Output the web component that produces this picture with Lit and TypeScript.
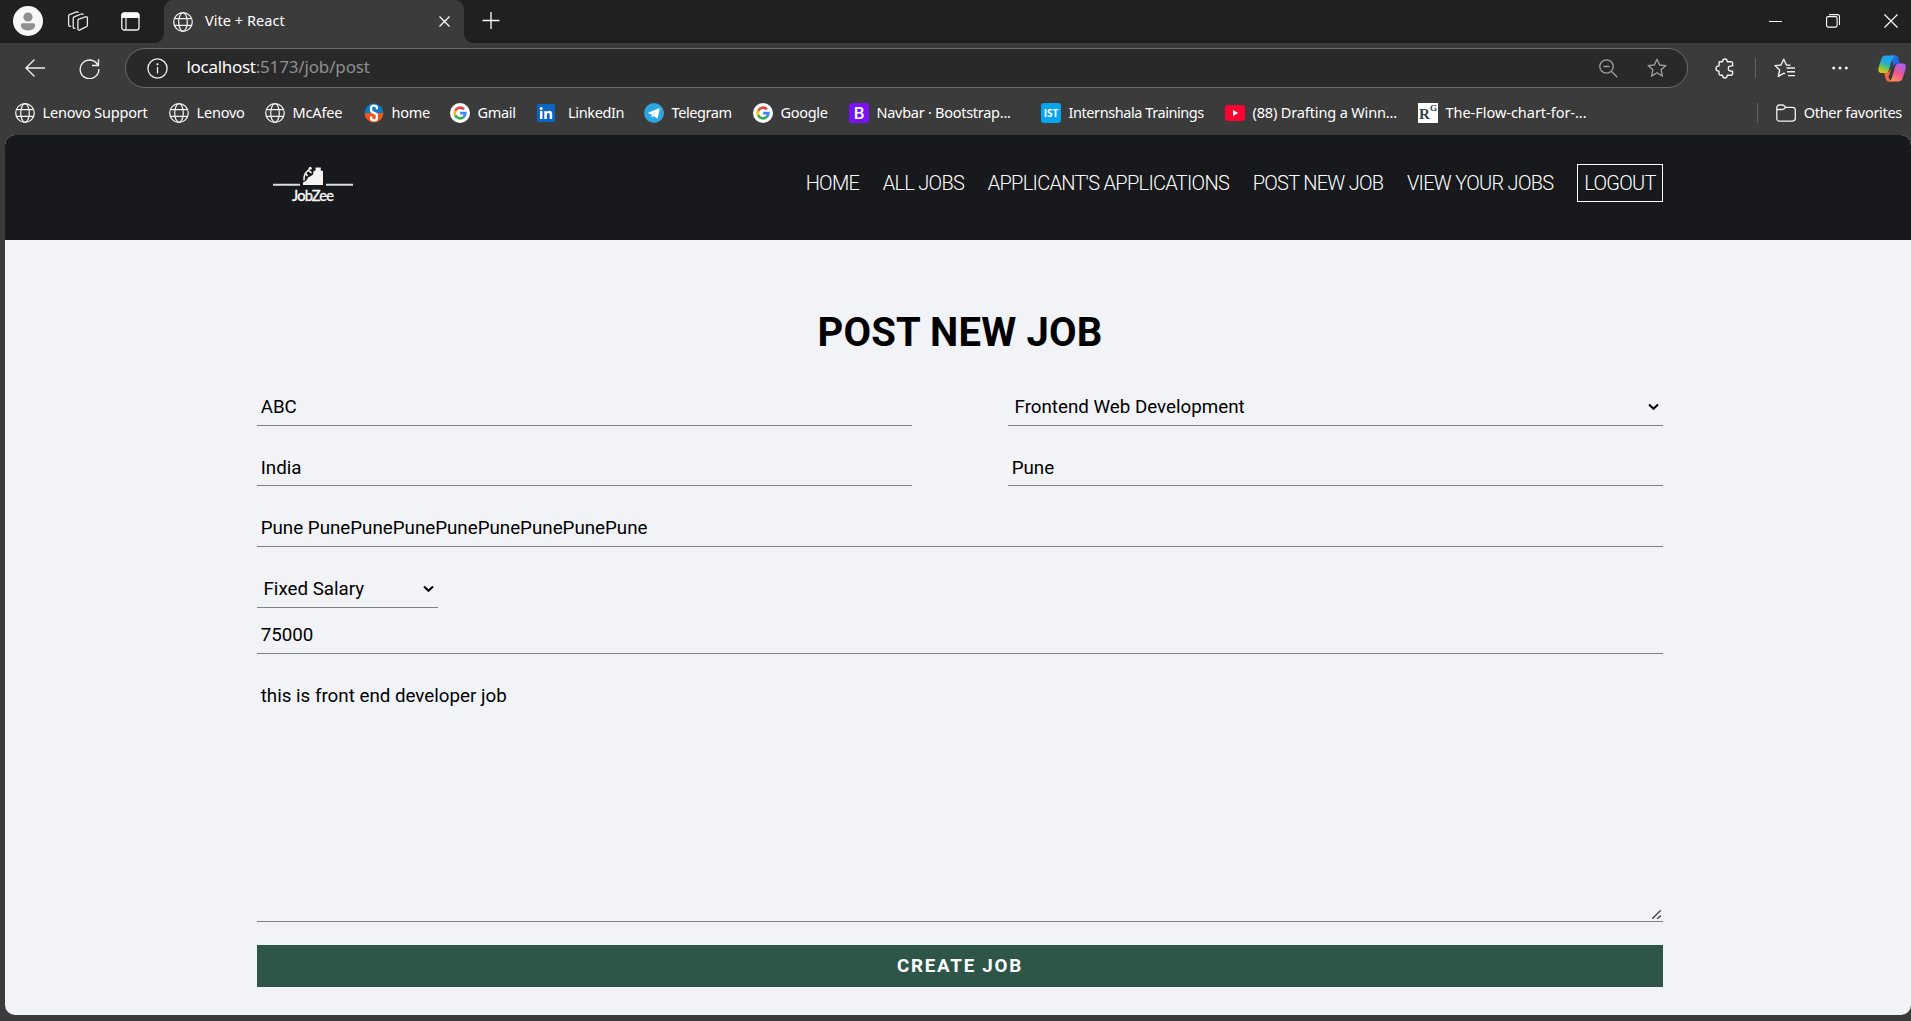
import { LitElement, html, css, svg } from "lit";
import { customElement } from "lit/decorators.js";

const globe = (size = 20) => html`<svg width=${size} height=${size} viewBox="0 0 20 20" fill="none" stroke="#f2f2f2" stroke-width="1.25">
  <circle cx="10" cy="10" r="9.3" />
  <ellipse cx="10" cy="10" rx="4.3" ry="9.3" />
  <path d="M1.6 6.6h16.8M1.6 13.4h16.8" />
</svg>`;

const google = html`<svg width="20" height="20" viewBox="0 0 20 20">
  <circle cx="10" cy="10" r="10" fill="#fff" />
  <g fill="none" stroke-width="2.6">
    <path d="M5.2 7.7A5.4 5.4 0 0 1 13.9 6.3" stroke="#ea4335" />
    <path d="M5.3 12.5A5.4 5.4 0 0 1 5.2 7.6" stroke="#fbbc05" />
    <path d="M13.7 14A5.4 5.4 0 0 1 5.2 12.4" stroke="#34a853" />
    <path d="M10.1 10.1h5.3A5.4 5.4 0 0 1 13.6 14" stroke="#4285f4" />
  </g>
</svg>`;

const shala = html`<svg width="20" height="20" viewBox="0 0 20 20">
  <path d="M.6 10a9.4 9.4 0 0 1 18.8 0z" fill="#0a7bc4" />
  <path d="M.6 10a9.4 9.4 0 0 0 18.8 0z" fill="#f0561f" />
  <path d="M12.9 6.2V4.6Q12.9 2.6 10 2.6T7.1 4.8V7.2Q7.1 8.9 10 9.9T12.9 12.6V15Q12.9 17.4 10 17.4T7.1 15V13.6" fill="none" stroke="#fff" stroke-width="2.3" />
</svg>`;

const linkedin = html`<svg width="20" height="20" viewBox="0 0 20 20">
  <rect x="0" y="1" width="18" height="18" rx="1.5" fill="#0a66c2" />
  <path d="M3 8h2.5v8H3zM7.3 8h2.4v1.2Q10.4 7.8 12.3 7.8 15.2 7.8 15.2 11.2V16h-2.5v-4.3Q12.7 9.9 11.3 9.9 9.8 9.9 9.8 11.8V16H7.3z" fill="#fff" />
  <circle cx="4.2" cy="5.4" r="1.5" fill="#fff" />
</svg>`;

const telegram = html`<svg width="20" height="20" viewBox="0 0 20 20">
  <circle cx="10" cy="10" r="10" fill="#2ca5e0" />
  <path d="M3.6 9.9 15 5.3q.9-.2.7.8l-1.9 8.7q-.3.9-1.1.4l-2.9-2.1-1.5 1.4q-.4.2-.5-.3l-.4-2.9-2.9-.8q-.7-.2 0-.6z" fill="#fff" />
  <path d="m7.6 11.500 5.700-4-4.400 4.600-.4 2.200" fill="#bfe0f2" />
</svg>`;

const bootstrap = html`<span class="tile boot">B</span>`;
const ist = html`<span class="tile ist">IST</span>`;
const youtube = html`<svg width="20" height="20" viewBox="0 0 20 20">
  <rect y="2" width="20" height="16" rx="3" fill="#ff0033" /><path d="m8 7 5.200 3L8 13z" fill="#fff" />
</svg>`;
const rgate = html`<span class="tile rg">R<sup>G</sup></span>`;

interface Bookmark { icon: unknown; label: string; width: number; track: number; cls?: string }

const bookmarks: Bookmark[] = [
  { icon: globe(), label: "Lenovo Support", width: 154, track: -0.2 },
  { icon: globe(), label: "Lenovo", width: 96, track: -0.2 },
  { icon: globe(), label: "McAfee", width: 99, track: -0.15 },
  { icon: shala, label: "home", width: 86, track: -0.3 },
  { icon: google, label: "Gmail", width: 87, track: -0.3 },
  { icon: linkedin, label: "LinkedIn", width: 107, track: -0.35, cls: "wide" },
  { icon: telegram, label: "Telegram", width: 109, track: -0.42 },
  { icon: google, label: "Google", width: 96, track: -0.3 },
  { icon: bootstrap, label: "Navbar · Bootstrap...", width: 192, track: -0.27 },
  { icon: ist, label: "Internshala Trainings", width: 184, track: -0.43 },
  { icon: youtube, label: "(88) Drafting a Winn...", width: 193, track: -0.14 },
  { icon: rgate, label: "The-Flow-chart-for-...", width: 200, track: -0.03 },
];

const star = svg`<path d="M10 1.2l2.6 5.8 6.3.6-4.8 4.2 1.4 6.3L10 14.8l-5.5 3.3 1.4-6.3L1.1 7.6 7.4 7z" />`;

@customElement("browser-tabs")
class BrowserTabs extends LitElement {
  static styles = css`
    :host { display: flex; height: 43px; background: #202020; color: #fff; font: 14.5px "Noto Sans", "Open Sans", sans-serif; }
    svg { display: block; flex: none; }
    .lead { display: flex; align-items: center; width: 164px; padding: 0 0 1px 13px; box-sizing: border-box; flex: none; }
    .stack { margin-left: 24px; }
    .panel { margin-left: 32px; }
    .tab { position: relative; width: 300px; box-sizing: border-box; background: #3b3b3b; border-radius: 9px 9px 0 0; display: flex; align-items: center; padding: 0 14px 0 9px; }
    .tab::before, .tab::after { content: ""; position: absolute; bottom: 0; width: 9px; height: 9px; }
    .tab::before { left: -9px; background: radial-gradient(circle at 0 0, #202020 8.5px, #3b3b3b 9px); }
    .tab::after { right: -9px; background: radial-gradient(circle at 100% 0, #202020 8.5px, #3b3b3b 9px); }
    .title { margin-left: 12px; flex: 1; letter-spacing: 0.05px; line-height: 20px; padding-bottom: 3px; }
    .plus { margin: 12px 0 0 18px; }
    .win { margin-left: auto; display: flex; align-items: center; gap: 44px; padding: 0 13px 1px 0; }
  `;
  render() {
    return html`
      <div class="lead">
        <svg width="30" height="30" viewBox="0 0 30 30"><circle cx="15" cy="15" r="15" fill="#f7f7f7" /><circle cx="15" cy="11" r="4.6" fill="#919191" /><path d="M9.6 17.2h10.8q1.8 0 1.8 1.8 0 5.4-7.2 5.4T7.8 19q0-1.8 1.8-1.8z" fill="#919191" /></svg>
        <svg class="stack" width="22" height="21" viewBox="0 0 22 21" fill="none" stroke="#e8e8e8" stroke-width="1.3" stroke-linejoin="round"><path d="M11.2 8.3 18.4 5.8q2-.5 2 1.2v7.2q0 1-.9 1.4l-6.6 3.3q-2 .8-2-1.2V9.6q0-.9.9-1.3z" /><path d="M8.4 17.2Q6.2 18 6.2 15.9V7.3q0-1 .9-1.4l7.2-2.9q1.5-.5 1.8.8M4.2 15Q1.6 16 1.6 13.5V5.1q0-1 .9-1.4L9.6.9q1.300-.4 1.800.8" /></svg>
        <svg class="panel" width="19" height="19" viewBox="0 0 19 19"><rect x=".8" y=".8" width="17.2" height="17.2" rx="2.6" fill="none" stroke="#f4f4f4" stroke-width="1.3" /><path d="M.5 6V3Q.5.5 3 .5h13Q18.4.5 18.4 3v3z" fill="#f8f8f8" /><path d="M5 6v12" stroke="#f4f4f4" stroke-width="1.2" /></svg>
      </div>
      <div class="tab">
        ${globe()}
        <span class="title">Vite + React</span>
        <svg width="11" height="11" viewBox="0 0 11 11" stroke="#fff" stroke-width="1.3"><path d="m.5.5 10 10M10.5.5l-10 10" /></svg>
      </div>
      <svg class="plus" width="18" height="18" viewBox="0 0 18 18" stroke="#fff" stroke-width="1.3"><path d="M9 0v17M.5 8.5h17" /></svg>
      <div class="win">
        <svg width="13" height="13" viewBox="0 0 13 13" stroke="#fff"><path d="M0 6.5h13" /></svg>
        <svg width="14" height="14" viewBox="0 0 14 14" fill="none" stroke="#fff" stroke-width="1.1"><rect x=".6" y="2.6" width="10.5" height="10.5" rx="1.5" /><path d="M3 .6h8.500q2 0 2 2v8.500" /></svg>
        <svg width="14" height="14" viewBox="0 0 14 14" stroke="#fff" stroke-width="1.2"><path d="m.5.5 13 13m0-13-13 13" /></svg>
      </div>`;
  }
}

@customElement("browser-toolbar")
class BrowserToolbar extends LitElement {
  static styles = css`
    :host { display: flex; align-items: center; height: 49px; background: #3b3b3b; font: 17px "Noto Sans", "Open Sans", sans-serif; box-sizing: border-box; padding-top: 1px; }
    svg { display: block; flex: none; }
    .back { margin-left: 25px; }
    .reload { margin-left: 34px; }
    .pill { margin-left: 25px; width: 1563px; height: 40px; box-sizing: border-box; border: 1px solid #6b6b6b; border-radius: 20px; background: #292929; display: flex; align-items: center; padding: 0 20px 0 21px; flex: none; }
    .url { flex: 1; margin-left: 18.5px; color: #8f8f8f; letter-spacing: -0.15px; padding-bottom: 3px; }
    .host { color: #fff; letter-spacing: -0.3px; }
    .mag { margin-right: 29px; }
    .puzzle { margin-left: 27px; }
    .sep { width: 1px; height: 20px; background: #636363; margin: 0 18px 0 20px; }
    .dots { margin: 0 30px 0 37px; }
  `;
  render() {
    return html`
      <svg class="back" width="20" height="18" viewBox="0 0 20 18" fill="none" stroke="#f0f0f0" stroke-width="1.4"><path d="M20 9H1M9.5.6 1 9l8.5 8.4" /></svg>
      <svg class="reload" width="21" height="21" viewBox="0 0 21 21" fill="none" stroke="#f0f0f0" stroke-width="1.4"><path d="M19.3 8.3A9.3 9.3 0 1 0 19.8 11M19.5 1.200v6.300H13" /></svg>
      <div class="pill">
        <svg width="21" height="21" viewBox="0 0 21 21" fill="none" stroke="#f0f0f0" stroke-width="1.3"><circle cx="10.5" cy="10.5" r="9.6" /><path d="M10.5 9v6.5" /><circle cx="10.5" cy="6.3" r=".5" fill="#f0f0f0" /></svg>
        <span class="url"><span class="host">localhost</span>:5173/job/post</span>
        <svg class="mag" width="19" height="19" viewBox="0 0 19 19" fill="none" stroke="#a0a0a0" stroke-width="1.3"><circle cx="7.5" cy="7.5" r="6.7" /><path d="m12.3 12.3 6 6M4.5 7.500h6" /></svg>
        <svg width="20" height="20" viewBox="0 0 20 20" fill="none" stroke="#a0a0a0" stroke-width="1.3" stroke-linejoin="round">${star}</svg>
      </div>
      <svg class="puzzle" width="20" height="21" viewBox="0 0 20 21" fill="none" stroke="#f0f0f0" stroke-width="1.4" stroke-linejoin="round"><path d="M4.200 3.800h3.300Q7.600 1 9.900 1t2.400 2.800h3.900q1.400 0 1.400 1.400v2.700Q13.300 7.500 13.300 10.500t4.300 2.600v2.700q0 1.400-1.400 1.400h-3.900Q12.200 20 9.900 20t-2.400-2.800H5.400Q4 17.200 4 15.800v-2.700Q1 13 1 10.500T4 7.900z" /></svg>
      <span class="sep"></span>
      <svg width="21" height="20" viewBox="0 0 21 20" fill="none" stroke="#f0f0f0" stroke-width="1.4" stroke-linejoin="round"><path d="M9.900 15.200 4.300 18.500l1.400-6.500L1 7.600 7 7l2.700-5.800L12.400 7l4 .3M12.500 10h8.500M13 13.800h8M14 17.600h7M9.900 15.200l1.200.5" /></svg>
      <svg class="dots" width="16" height="4" viewBox="0 0 16 4" fill="#f4f4f4"><circle cx="1.7" cy="2" r="1.5" /><circle cx="8" cy="2" r="1.5" /><circle cx="14.3" cy="2" r="1.5" /></svg>
      <svg width="28" height="27" viewBox="0 0 28 27">
        <defs>
          <linearGradient id="cool" x1=".6" y1="0" x2=".2" y2="1"><stop offset="0" stop-color="#20a4f0" /><stop offset=".4" stop-color="#21a9d8" /><stop offset=".68" stop-color="#6bc25b" /><stop offset="1" stop-color="#f5c400" /></linearGradient>
          <linearGradient id="warm" x1=".7" y1="0" x2=".2" y2="1"><stop offset="0" stop-color="#b060f0" /><stop offset=".5" stop-color="#ee5697" /><stop offset="1" stop-color="#ff9655" /></linearGradient>
          <linearGradient id="deep" x1="0" y1="0" x2="1" y2="1"><stop offset="0" stop-color="#1c8fe8" /><stop offset="1" stop-color="#2146d2" /></linearGradient>
        </defs>
        <path d="M13 .5h4.500q2 0 2.800 2.300L21.800 9h-3.300q-2.200 0-3 2.500z" fill="url(#deep)" />
        <path d="M6 17h4.500l2.500-3-2.500 8q1 3.500 3 4.500h-3q-2 0-2.800-2.500z" fill="#f4653c" />
        <path d="M7.500.5h9.500q-2 .5-2.900 3.500L10.700 15.500Q9.800 18 7.500 18H3.500Q-.8 18 .6 12.500L3.300 4Q4.400.5 7.500.5z" fill="url(#cool)" />
        <path d="M20.500 26.500H11q2-.5 2.900-3.500L17.300 11.500Q18.200 8.500 20.500 8.500h4q4.300 0 2.900 6L24.700 23q-1.100 3.500-4.200 3.500z" fill="url(#warm)" />
      </svg>`;
  }
}

@customElement("bookmark-bar")
class BookmarkBar extends LitElement {
  static styles = css`
    :host { display: flex; align-items: center; height: 43px; background: #3b3b3b; padding: 0 9px 1px 15px; box-sizing: border-box; color: #fff; font: 14.5px "Noto Sans", "Open Sans", sans-serif; letter-spacing: -0.3px; white-space: nowrap; }
    svg { display: block; flex: none; }
    .mark { display: flex; align-items: center; gap: 7.5px; flex: none; }
    .wide { gap: 11px; }
    .label { padding-bottom: 2px; }
    .tile { width: 20px; height: 20px; border-radius: 3px; flex: none; display: flex; justify-content: center; align-items: center; letter-spacing: 0; }
    .boot { background: #7a12f5; font: 500 17px/20px Roboto, sans-serif; }
    .ist { background: #05a5f0; font: 700 10px/20px "Open Sans", sans-serif; }
    .rg { background: #fff; color: #30424a; border-radius: 0; font: 700 15px/18px "Liberation Serif", serif; align-items: flex-end; }
    .rg sup { font-size: 9px; line-height: 9px; align-self: flex-start; margin-top: 1px; }
    .other { display: flex; align-items: center; margin-left: auto; gap: 8px; }
    .sep { width: 1px; height: 20px; background: #636363; margin-right: 10px; }
  `;
  render() {
    return html`
      ${bookmarks.map((b) => html`<span class="mark ${b.cls ?? ""}" style="width:${b.width}px;letter-spacing:${b.track}px">${b.icon}<span class="label">${b.label}</span></span>`)}
      <span class="other">
        <span class="sep"></span>
        <svg width="20" height="18" viewBox="0 0 20 18" fill="none" stroke="#f0f0f0" stroke-width="1.3"><path d="M.8 4Q.8 1 3.5 1h3q1 0 1.600.7L9.700 3.300H16.500q2.800 0 2.800 2.800v8.200q0 2.800-2.800 2.800h-13Q.8 17.1.8 14.3zM.8 5.500h5.600q.9 0 1.500-.6l1.800-1.600" /></svg>
        <span class="label">Other favorites</span>
      </span>`;
  }
}

@customElement("site-header")
class SiteHeader extends LitElement {
  static styles = css`
    :host { display: flex; justify-content: space-between; align-items: flex-start; height: 105px; box-sizing: border-box; background: #18191c; padding: 29px 248px 0 268px; color: #fff; font: 300 20px Roboto, sans-serif; }
    .logo { display: block; margin-top: 2px; }
    .word { font: 500 14.6px Lato, sans-serif; stroke: #f4f4f4; stroke-width: 0.3px; }
    .nav { display: flex; align-items: center; gap: 23.6px; height: 38px; letter-spacing: -0.72px; white-space: nowrap; }
    .logout { height: 36px; line-height: 36px; border: 1px solid #fff; width: 84px; text-align: center; }
  `;
  render() {
    return html`
      <svg class="logo" width="80" height="40" viewBox="0 0 80 40" fill="#f4f4f4">
        <path d="M0 17.7h27v2H0zM53 17.7h27v2H53z" fill="#dededa" />
        <path d="M30 19V16.5l3.500-2 1.500-3 3-1.500 2-1.500 .7-3.800h1.800V1.500h5.300v3.200H50V19z" />
        <path d="M36.300 3.200 32.500 7l2 3M32.500 7 31.200 10.500 31 14.500M35 4.200l3.600 2.600" fill="none" stroke="#f4f4f4" stroke-width="1.5" /><circle cx="37.2" cy="2.2" r="1.500" />
        <text class="word" x="19" y="35" textLength="42">JobZee</text>
      </svg>
      <nav class="nav">
        <span>HOME</span><span>ALL JOBS</span><span>APPLICANT'S APPLICATIONS</span><span>POST NEW JOB</span><span>VIEW YOUR JOBS</span>
        <span class="logout">LOGOUT</span>
      </nav>`;
  }
}

@customElement("job-form")
class JobForm extends LitElement {
  static styles = css`
    :host { display: block; padding: 69px 248px 0 252px; font-family: Roboto, sans-serif; color: #000; }
    .heading { margin: 0; text-align: center; font-size: 40px; font-weight: 700; line-height: 48px; letter-spacing: 0.18px; }
    .row { display: grid; grid-template-columns: 655px 655px; justify-content: space-between; }
    .first { margin-top: 31px; }
    .second { margin-top: 24px; }
    .address { margin-top: 23px; }
    .salary { margin-top: 23px; width: 181px; }
    .amount { margin-top: 8px; }
    .field { display: block; width: 100%; height: 38px; box-sizing: border-box; border: 0; border-bottom: 1px solid #808285; border-radius: 0; background: transparent; padding: 0 3.7px; margin-inline: 0; font: 400 18.75px Roboto, sans-serif; color: #000; outline: 0; appearance: none; }
    .short { height: 36px; }
    .pick { position: relative; }
    .pick .field { padding: 0 6.500px; }
    .chev { position: absolute; right: 4px; top: 15px; }
    .desc { height: 236px; margin-top: 32px; line-height: 20px; resize: none; }
    .area { position: relative; }
    .grip { position: absolute; right: 2px; bottom: 3px; }
    .submit { display: block; width: 100%; height: 42px; margin-top: 23px; padding: 0; border: 0; background: #2d5649; color: #fff; font: 700 18.75px Roboto, sans-serif; letter-spacing: 1.75px; }
  `;
  private chevron() {
    return html`<svg class="chev" width="11" height="8" viewBox="0 0 11 8" fill="none" stroke="#000" stroke-width="2"><path d="M1 1.500 5.500 5.800 10 1.500" /></svg>`;
  }
  render() {
    return html`
      <h1 class="heading">POST NEW JOB</h1>
      <div class="row first">
        <input class="field" value="ABC" />
        <div class="pick"><select class="field"><option>Frontend Web Development</option></select>${this.chevron()}</div>
      </div>
      <div class="row second">
        <input class="field short" value="India" />
        <input class="field short" value="Pune" />
      </div>
      <div class="address"><input class="field" value="Pune PunePunePunePunePunePunePunePune" /></div>
      <div class="pick salary"><select class="field"><option>Fixed Salary</option></select>${this.chevron()}</div>
      <div class="amount"><input class="field" value="75000" /></div>
      <div class="area">
        <textarea class="field desc">this is front end developer job</textarea>
        <svg class="grip" width="9" height="9" viewBox="0 0 9 9" stroke="#4a4a4a" stroke-width="1.5"><path d="M0 9 9 0M5 9 9 5.5" /></svg>
      </div>
      <button class="submit">CREATE JOB</button>`;
  }
}

@customElement("app-root")
class AppRoot extends LitElement {
  static styles = css`
    :host { display: block; width: 1911px; height: 1021px; overflow: hidden; background: #3b3b3b; }
    .page { margin-left: 5px; height: 880px; background: #f1f3f7; border-radius: 10px; overflow: hidden; }
  `;
  render() {
    return html`
      <browser-tabs></browser-tabs>
      <browser-toolbar></browser-toolbar>
      <bookmark-bar></bookmark-bar>
      <main class="page"><site-header></site-header><job-form></job-form></main>`;
  }
}
